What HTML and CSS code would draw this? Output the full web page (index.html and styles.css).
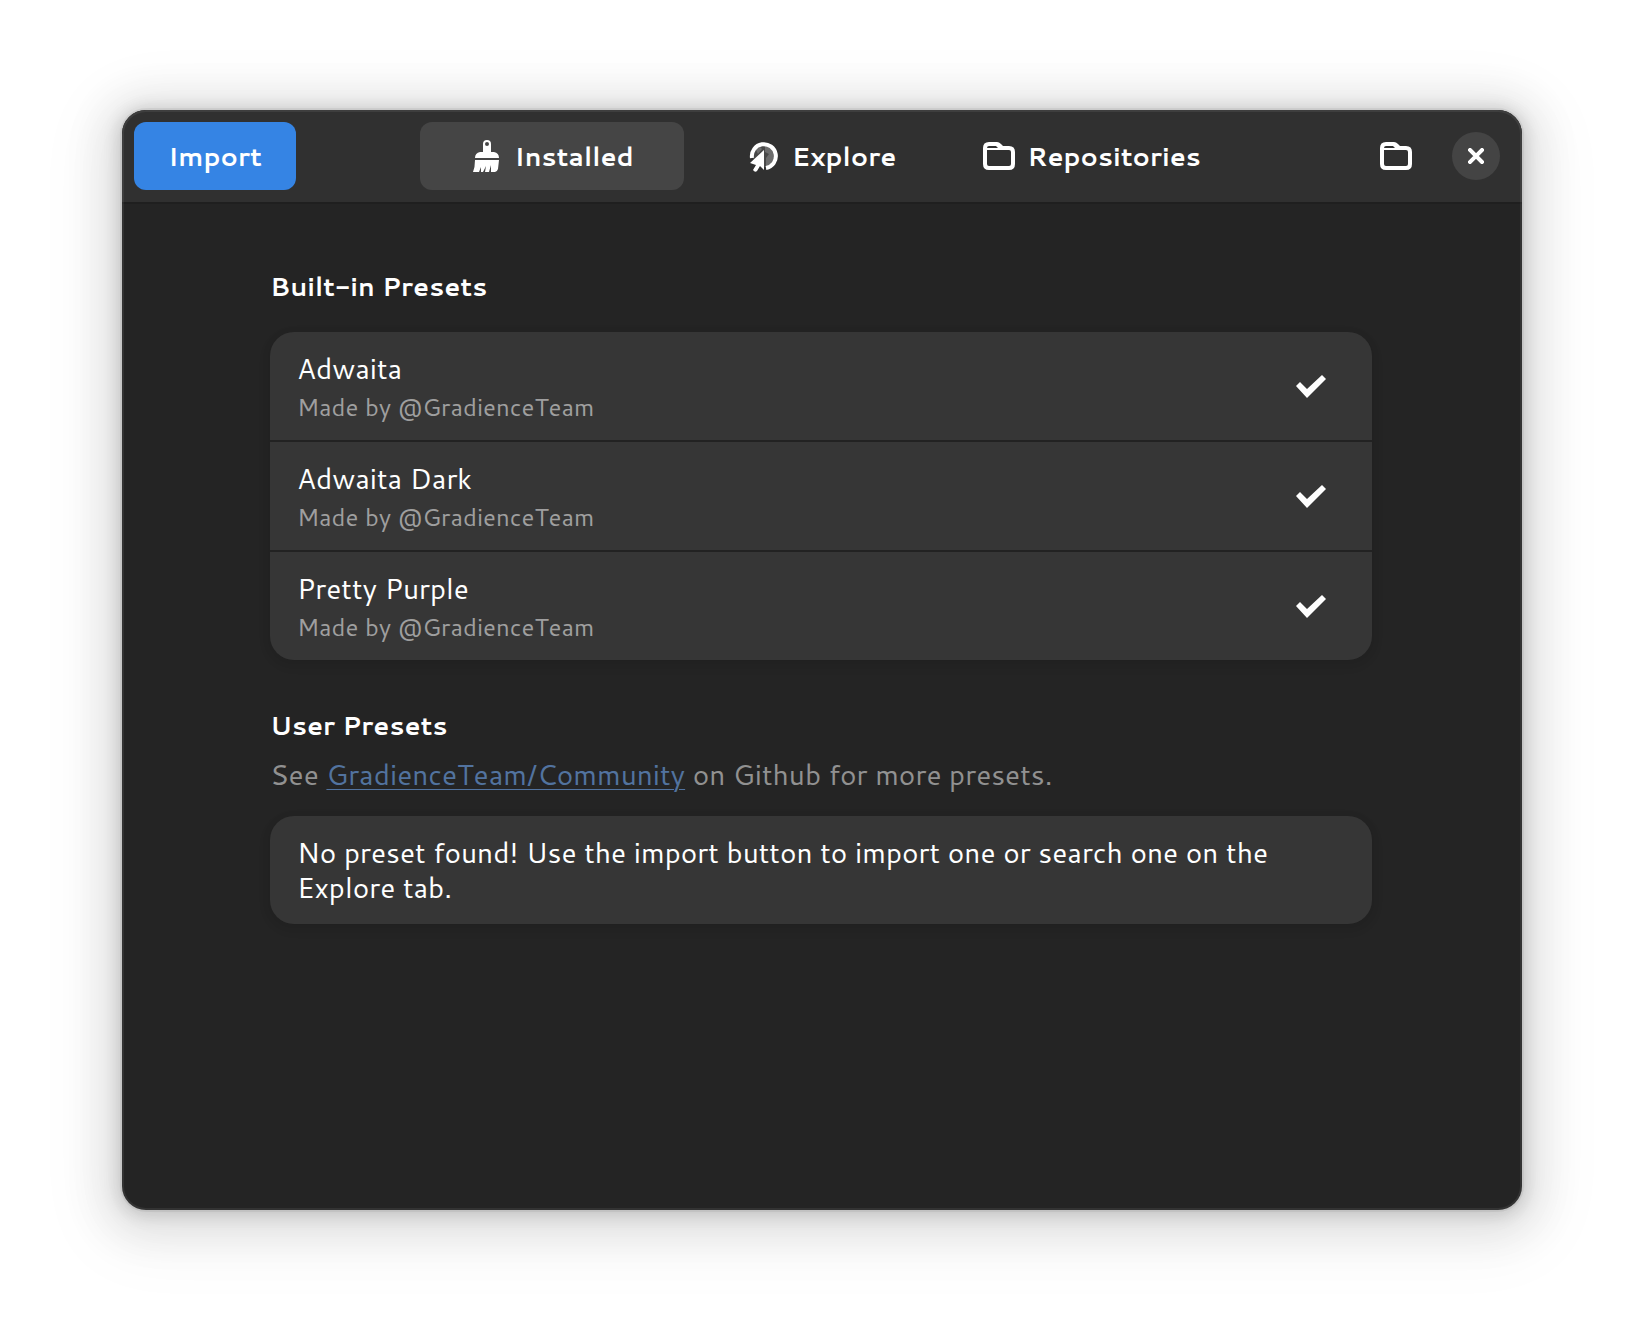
FILE: index.html
```html
<!DOCTYPE html>
<html lang="en">
<head>
<meta charset="utf-8">
<title>Presets</title>
<link rel="stylesheet" href="styles.css">
</head>
<body>
<svg class="symbols" aria-hidden="true">
  <symbol id="folder" viewBox="0 0 32 32">
    <path fill="currentColor" fill-rule="evenodd" d="M6 2H14Q16 2 18 4L20 6H26Q32 6 32 12V24Q32 30 26 30H6Q0 30 0 24V8Q0 2 6 2ZM4 10V24Q4 26 6 26H26Q28 26 28 24V12Q28 10 26 10ZM4 8H15L13 6H6Q4 6 4 8Z"/>
  </symbol>
  <symbol id="check" viewBox="0 0 32 32">
    <path d="M2 16L6 12L13 19L28 5L32 9L13 28Z" fill="currentColor"/>
  </symbol>
</svg>
<main class="window">
  <header class="headerbar">
    <div class="start"><button class="import" type="button">Import</button></div>
    <nav class="switcher">
      <button class="tab active" type="button">
        <svg class="icon" viewBox="0 0 32 32" aria-hidden="true"><path fill="currentColor" fill-rule="evenodd" d="M13 12V4a4 4 0 0 1 8 0V12H24Q29 13 29 18H5Q5 13 10 12ZM17 2a2 2 0 1 0 0 4a2 2 0 0 0 0-4ZM5 20H29L28 29Q27 32 25 32H21V25L19 32H15L16 26L13 32H11V27L9 32H3Q5 27 5 20Z"/></svg>
        <span>Installed</span>
      </button>
      <button class="tab" type="button">
        <svg class="icon" viewBox="0 0 32 32" aria-hidden="true"><circle cx="16" cy="16" r="11" fill="#484848"/><path d="M17 6L22 7L26 12V18L22 25L18 27V18L21 14L17 12ZM8 10L12 7L14 9L10 14Z" fill="#6c6c6c"/><path d="M4 18A12 12 0 1 1 18 28" fill="none" stroke="currentColor" stroke-width="4"/><path d="M16 10L2 23L8 25L5 30Q7 33 9 31L12 26L16 30Z" fill="currentColor"/></svg>
        <span>Explore</span>
      </button>
      <button class="tab" type="button">
        <svg class="icon" aria-hidden="true"><use href="#folder"/></svg>
        <span>Repositories</span>
      </button>
    </nav>
    <div class="end">
      <button class="flat" type="button" aria-label="Open presets folder"><svg class="icon" aria-hidden="true"><use href="#folder"/></svg></button>
      <button class="close" type="button" aria-label="Close"><svg class="cross" viewBox="0 0 16 16" aria-hidden="true"><path d="M2 2L14 14M14 2L2 14" stroke="currentColor" stroke-width="4" stroke-linecap="square"/></svg></button>
    </div>
  </header>
  <div class="content">
    <section class="group">
      <h2>Built-in Presets</h2>
      <ul class="card">
        <li class="row"><div class="labels"><p>Adwaita</p><p class="author">Made by @GradienceTeam</p></div><button class="apply" type="button" aria-label="Apply Adwaita"><svg class="icon" aria-hidden="true"><use href="#check"/></svg></button></li>
        <li class="row"><div class="labels"><p>Adwaita Dark</p><p class="author">Made by @GradienceTeam</p></div><button class="apply" type="button" aria-label="Apply Adwaita Dark"><svg class="icon" aria-hidden="true"><use href="#check"/></svg></button></li>
        <li class="row"><div class="labels"><p>Pretty Purple</p><p class="author">Made by @GradienceTeam</p></div><button class="apply" type="button" aria-label="Apply Pretty Purple"><svg class="icon" aria-hidden="true"><use href="#check"/></svg></button></li>
      </ul>
    </section>
    <section class="group">
      <h2>User Presets</h2>
      <p class="description">See <a href="#community">GradienceTeam/Community</a> on Github for more presets.</p>
      <div class="card"><p class="row">No preset found! Use the import button to import one or search one on the Explore tab.</p></div>
    </section>
  </div>
</main>
</body>
</html>
```
FILE: styles.css
```css
* { box-sizing: border-box; }
body {
  margin: 0;
  min-height: 100vh;
  padding: 110px 122px 134px;
  display: flex;
  background: #fff;
  color: #fff;
  font: 28px/35px Cantarell, "Noto Sans", sans-serif;
}
h2, p, ul { margin: 0; padding: 0; }
button {
  border: 0;
  padding: 0;
  background: none;
  color: inherit;
  font: inherit;
  font-size: 26px;
  font-weight: 700;
}
.symbols { position: absolute; width: 0; height: 0; }
.icon { display: block; width: 32px; height: 32px; flex: none; }

.window {
  position: relative;
  flex: 1;
  min-width: 0;
  border-radius: 24px;
  background: #242424;
  overflow: hidden;
  box-shadow: 0 2px 16px 4px rgba(0, 0, 0, .13), 0 6px 40px 20px rgba(0, 0, 0, .09),
    0 12px 64px 32px rgba(0, 0, 0, .04), 0 0 0 2px rgba(0, 0, 0, .05);
}
/* light rim over the header and content */
.window::after {
  content: "";
  position: absolute;
  inset: 0;
  border-radius: inherit;
  box-shadow: inset 0 0 0 2px rgba(255, 255, 255, .07);
  pointer-events: none;
}

.headerbar {
  display: grid;
  grid-template-columns: 1fr auto 1fr;
  align-items: start;
  padding: 12px;
  background: #303030;
  border-bottom: 2px solid #1f1f1f;
}
.import {
  min-width: 162px;
  height: 68px;
  border-radius: 12px;
  background: #3584e4;
}
.switcher { display: grid; grid-template-columns: repeat(3, 264px); gap: 6px; }
.tab {
  display: flex;
  align-items: center;
  justify-content: center;
  gap: 12px;
  height: 68px;
  border-radius: 12px;
}
.tab.active { background: #454545; }
.end { display: flex; justify-content: flex-end; align-items: center; gap: 22px; padding-right: 10px; }
.flat { display: grid; place-items: center; width: 68px; height: 68px; }
.close {
  display: grid;
  place-items: center;
  width: 48px;
  height: 48px;
  border-radius: 50%;
  background: #444;
}
.cross { width: 16px; height: 16px; }

.content { padding: 65px 150px 48px 148px; }
.group { margin-bottom: 48px; }
h2 { font-size: 26px; font-weight: 700; }
.card {
  margin-top: 28px;
  border-radius: 24px;
  background: #363636;
  list-style: none;
  box-shadow: 0 2px 6px 2px rgba(0, 0, 0, .07), 0 4px 12px 4px rgba(0, 0, 0, .03);
}
.row {
  display: flex;
  align-items: center;
  justify-content: space-between;
  height: 108px;
  padding: 0 30px 0 27px;
}
.row + .row { height: 110px; border-top: 2px solid #222; }
.labels { padding-top: 4px; }
.author { font-size: 24px; color: #9f9f9f; margin-top: 4px; }
.apply { padding: 0 16px; }
.description { margin-top: 14px; color: #919191; }
.description + .card { margin-top: 24px; }
.description a { color: #52739f; text-decoration-thickness: 1px; text-underline-offset: 4px; }
```
